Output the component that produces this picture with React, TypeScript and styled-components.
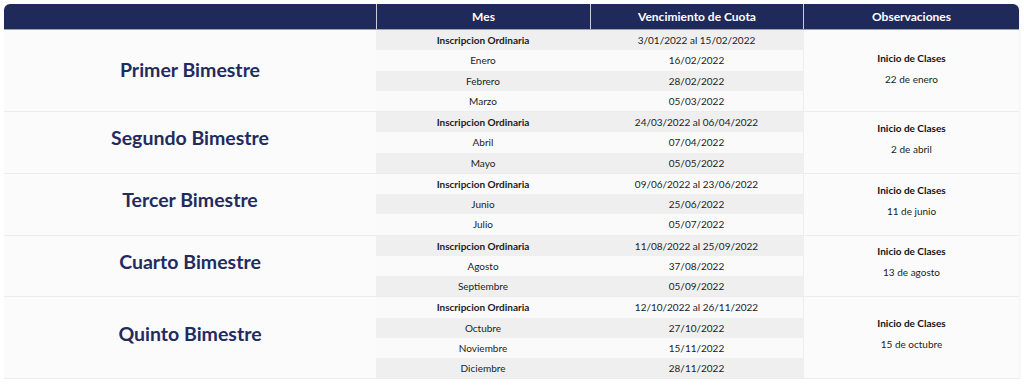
import React from 'react'
import styled, { createGlobalStyle } from 'styled-components'

const GlobalStyle = createGlobalStyle`
  body {
    margin: 0;
    background: #ffffff;
    font-family: Lato, "Open Sans", sans-serif;
  }
`

const Page = styled.div`
  padding: 4px 5px 0 4px;
`

const Table = styled.div`
  width: 1015px;
  box-shadow: 1px 1px 2px rgba(0, 0, 0, 0.06);
`

const HeaderRow = styled.div`
  display: grid;
  grid-template-columns: 372px 214px 213px 216px;
  height: 25px;
  background: #1f2a5b;
  border-radius: 6px 6px 0 0;
  border-bottom: 1px solid #9da1b0;
`

const HeaderCell = styled.div<{ divider?: boolean }>`
  display: flex;
  align-items: center;
  justify-content: center;
  color: #ffffff;
  font-size: 12px;
  font-weight: 700;
  border-left: ${({ divider }) => (divider ? '1px solid #c9ccd8' : 'none')};
`

const Group = styled.div`
  display: grid;
  grid-template-columns: 372px 427px 216px;
  border-bottom: 1px solid #ececec;
`

const SideCell = styled.div<{ lift: number }>`
  display: flex;
  flex-direction: column;
  align-items: center;
  justify-content: center;
  background: #fbfbfb;
  padding-bottom: ${({ lift }) => lift}px;
`

const Period = styled.div`
  color: #222b5e;
  font-size: 19.5px;
  font-weight: 700;
`

const Rows = styled.div`
  display: flex;
  flex-direction: column;
`

const Row = styled.div<{ shaded: boolean }>`
  display: grid;
  grid-template-columns: 214px 213px;
  height: 20.25px;
  background: ${({ shaded }) => (shaded ? '#efefef' : '#fafafa')};
`

const Cell = styled.div<{ strong?: boolean }>`
  display: flex;
  align-items: center;
  justify-content: center;
  color: #1c1c1c;
  font-size: 10px;
  font-weight: ${({ strong }) => (strong ? 700 : 400)};
`

const NoteCell = styled(SideCell)`
  border-left: 1px solid #eeeeee;
  gap: 9px;
`

const NoteTitle = styled.div`
  color: #111111;
  font-size: 10px;
  font-weight: 700;
`

const NoteText = styled.div`
  color: #1c1c1c;
  font-size: 10px;
`

interface Entry {
  month: string
  due: string
}

interface Period {
  name: string
  start: string
  entries: Entry[]
}

const periods: Period[] = [
  {
    name: 'Primer Bimestre',
    start: '22 de enero',
    entries: [
      { month: 'Inscripcion Ordinaria', due: '3/01/2022 al 15/02/2022' },
      { month: 'Enero', due: '16/02/2022' },
      { month: 'Febrero', due: '28/02/2022' },
      { month: 'Marzo', due: '05/03/2022' },
    ],
  },
  {
    name: 'Segundo Bimestre',
    start: '2 de abril',
    entries: [
      { month: 'Inscripcion Ordinaria', due: '24/03/2022 al 06/04/2022' },
      { month: 'Abril', due: '07/04/2022' },
      { month: 'Mayo', due: '05/05/2022' },
    ],
  },
  {
    name: 'Tercer Bimestre',
    start: '11 de junio',
    entries: [
      { month: 'Inscripcion Ordinaria', due: '09/06/2022 al 23/06/2022' },
      { month: 'Junio', due: '25/06/2022' },
      { month: 'Julio', due: '05/07/2022' },
    ],
  },
  {
    name: 'Cuarto Bimestre',
    start: '13 de agosto',
    entries: [
      { month: 'Inscripcion Ordinaria', due: '11/08/2022 al 25/09/2022' },
      { month: 'Agosto', due: '37/08/2022' },
      { month: 'Septiembre', due: '05/09/2022' },
    ],
  },
  {
    name: 'Quinto Bimestre',
    start: '15 de octubre',
    entries: [
      { month: 'Inscripcion Ordinaria', due: '12/10/2022 al 26/11/2022' },
      { month: 'Octubre', due: '27/10/2022' },
      { month: 'Noviembre', due: '15/11/2022' },
      { month: 'Diciembre', due: '28/11/2022' },
    ],
  },
]

export default function App() {
  let rowIndex = 0

  return (
    <Page>
      <GlobalStyle />
      <Table>
        <HeaderRow>
          <HeaderCell />
          <HeaderCell divider>Mes</HeaderCell>
          <HeaderCell divider>Vencimiento de Cuota</HeaderCell>
          <HeaderCell divider>Observaciones</HeaderCell>
        </HeaderRow>
        {periods.map((period, g) => (
          <Group key={period.name}>
            <SideCell lift={g === 0 ? 2 : 9}>
              <Period>{period.name}</Period>
            </SideCell>
            <Rows>
              {period.entries.map((entry, i) => {
                const shaded = rowIndex % 2 === 0
                rowIndex += 1
                return (
                  <Row key={entry.month} shaded={shaded}>
                    <Cell strong={i === 0}>{entry.month}</Cell>
                    <Cell>{entry.due}</Cell>
                  </Row>
                )
              })}
            </Rows>
            <NoteCell lift={g === 0 ? 5 : 8}>
              <NoteTitle>Inicio de Clases</NoteTitle>
              <NoteText>{period.start}</NoteText>
            </NoteCell>
          </Group>
        ))}
      </Table>
    </Page>
  )
}
